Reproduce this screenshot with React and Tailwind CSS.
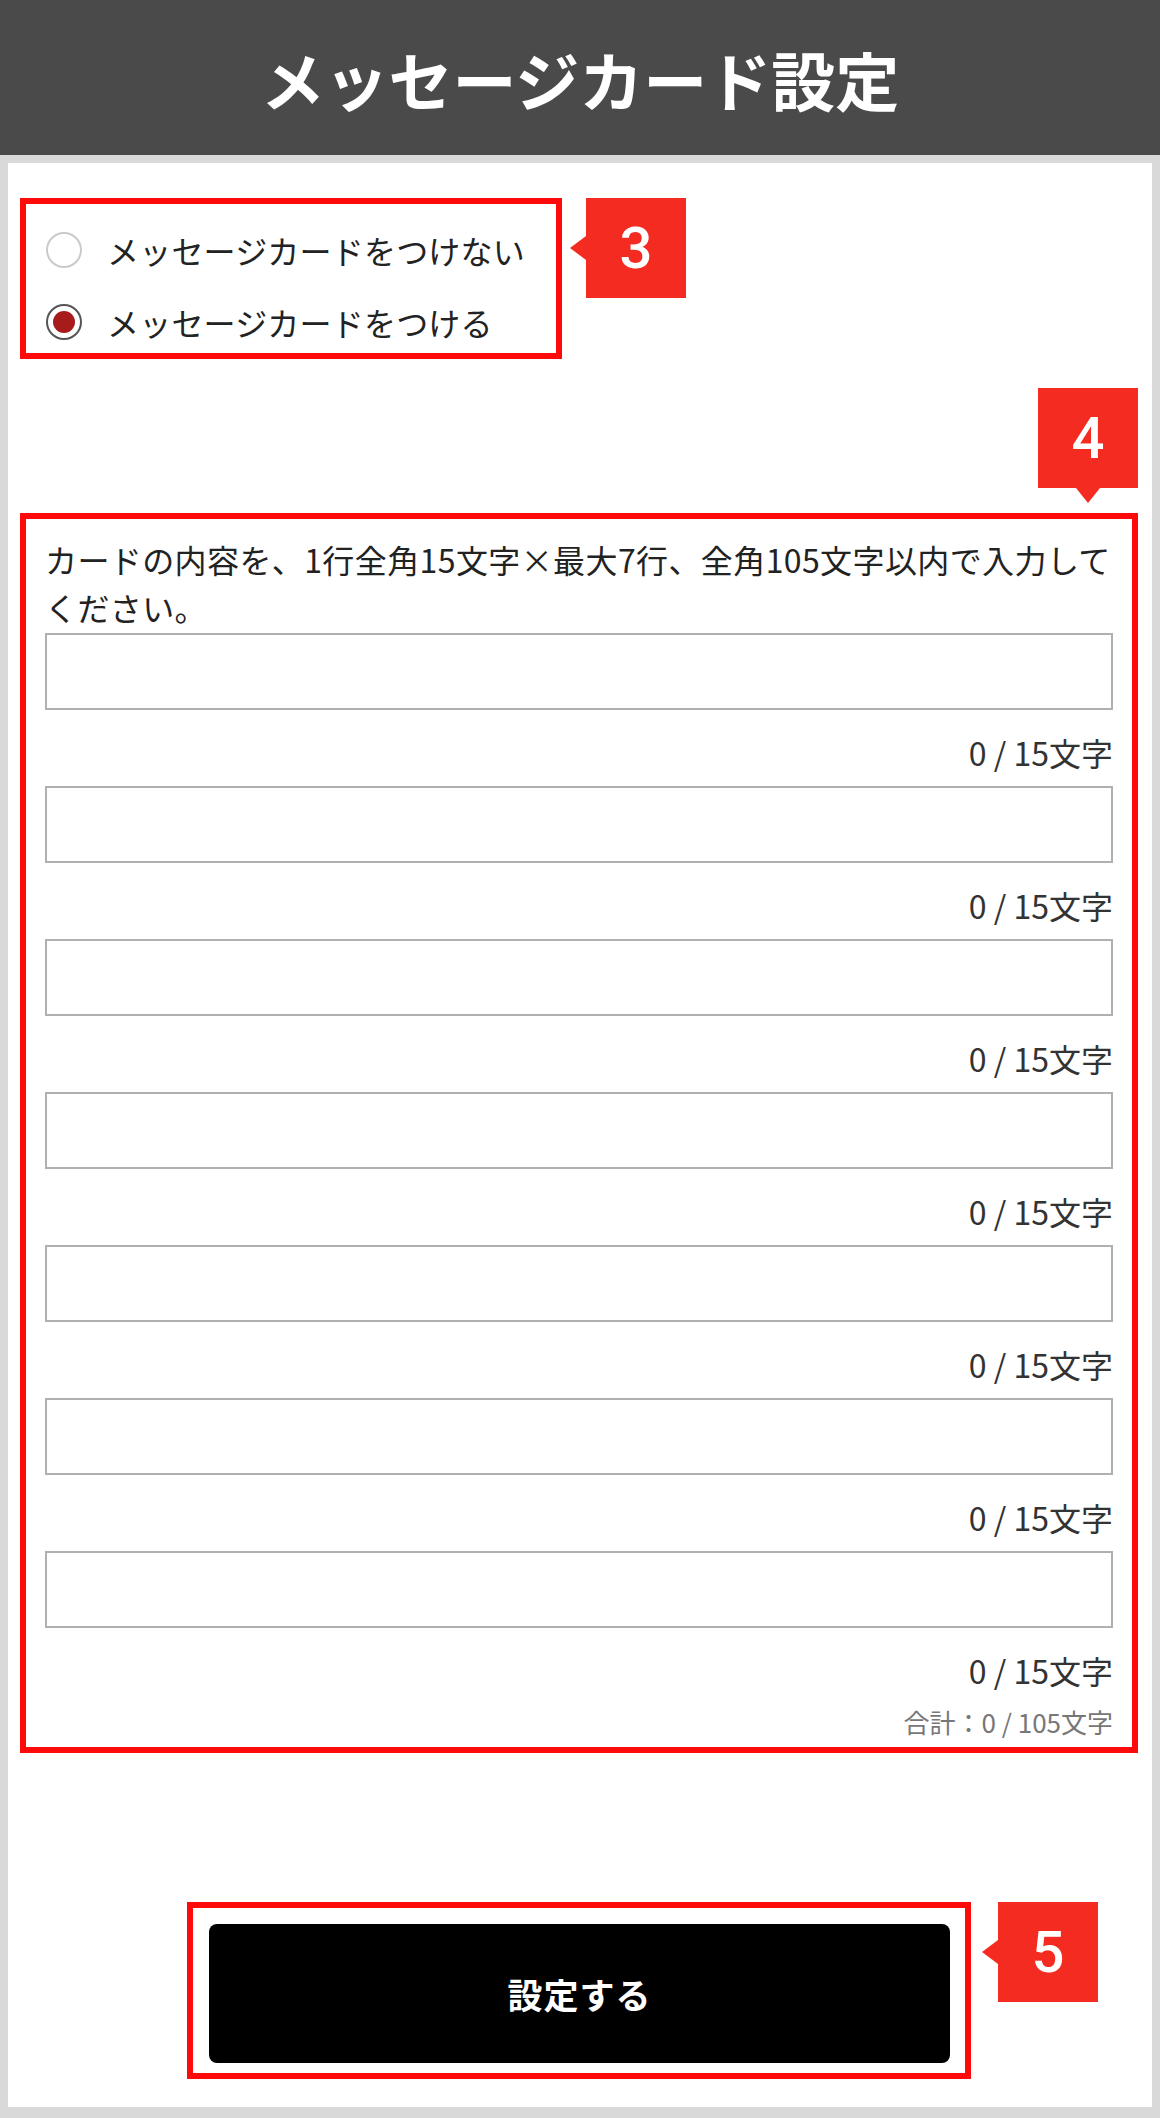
import React from "react"

const RED = "border-[#ff0a0a]"

function Badge({ n, tip }) {
  return (
    <div className="relative w-[100px] h-[100px] bg-[#f42b21] flex items-center justify-center">
      <span className="text-white text-[58px] font-medium leading-none font-['Roboto','Noto_Sans_CJK_JP',sans-serif]">{n}</span>
      {tip === "left" ? (
        <div className="absolute left-[-16px] top-[38px] w-0 h-0 border-y-[12px] border-y-transparent border-r-[16px] border-r-[#f42b21]" />
      ) : (
        <div className="absolute bottom-[-15px] left-[38px] w-0 h-0 border-x-[12px] border-x-transparent border-t-[15px] border-t-[#f42b21]" />
      )}
    </div>
  )
}

function Radio({ checked, label }) {
  return (
    <div className="flex items-center h-[48px]">
      {checked ? (
        <div className="w-[36px] h-[36px] rounded-full border-2 border-[#555] flex items-center justify-center">
          <div className="w-[22px] h-[22px] rounded-full bg-[#a81b1b]" />
        </div>
      ) : (
        <div className="w-[36px] h-[36px] rounded-full border-2 border-[#cacaca]" />
      )}
      <span className="ml-[25px] text-[32px] tracking-[0.2px] text-[#222] leading-none">{label}</span>
    </div>
  )
}

export default function App() {
  const lines = [1, 2, 3, 4, 5, 6, 7]

  return (
    <div className="w-[1160px] min-h-[2118px] bg-[#d9d9d9] flex flex-col font-['Noto_Sans_CJK_JP',sans-serif]">
      <header className="h-[155px] bg-[#4a4a4a] flex items-center justify-center">
        <h1 className="text-white text-[64px] font-bold leading-none">メッセージカード設定</h1>
      </header>

      <div className="mx-[8px] my-[8px] bg-white pl-[12px] pr-[14px] pt-[35px] pb-[28px]">
        {/* radio options */}
        <div className="flex items-start">
          <div className={`w-[542px] h-[161px] border-[6px] ${RED} pl-[20px] pt-[22px] flex flex-col gap-[24px]`}>
            <Radio label="メッセージカードをつけない" />
            <Radio checked label="メッセージカードをつける" />
          </div>
          <div className="ml-[24px]">
            <Badge n="3" tip="left" />
          </div>
        </div>

        {/* message lines */}
        <div className="flex justify-end mt-[29px]">
          <Badge n="4" tip="down" />
        </div>
        <div className={`mt-[25px] border-[6px] ${RED} px-[19px] pt-[16px] pb-[7px]`}>
          <p className="mb-[2px] text-[32px] leading-[48px] tracking-[0.4px] text-[#222]">
            カードの内容を、1行全角15文字×最大7行、全角105文字以内で入力してください。
          </p>
          {lines.map((i) => (
            <div key={i}>
              <div className="h-[77px] border-2 border-[#b0b0b0] bg-white" />
              <div className="mt-[17px] mb-[9px] text-right text-[32px] leading-[50px] text-[#333]">0 / 15文字</div>
            </div>
          ))}
          <div className="mt-[3px] text-right text-[26px] leading-[36px] text-[#777]">合計：0 / 105文字</div>
        </div>

        {/* submit */}
        <div className="mt-[149px] flex items-start pl-[167px]">
          <div className={`w-[784px] border-[6px] ${RED} pl-[16px] pr-[15px] pt-[16px] pb-[10px]`}>
            <button className="w-full h-[139px] bg-black rounded-[8px] flex items-center justify-center">
              <span className="text-white text-[35px] font-bold tracking-[1px] leading-none">設定する</span>
            </button>
          </div>
          <div className="ml-[27px]">
            <Badge n="5" tip="left" />
          </div>
        </div>
      </div>
    </div>
  )
}
